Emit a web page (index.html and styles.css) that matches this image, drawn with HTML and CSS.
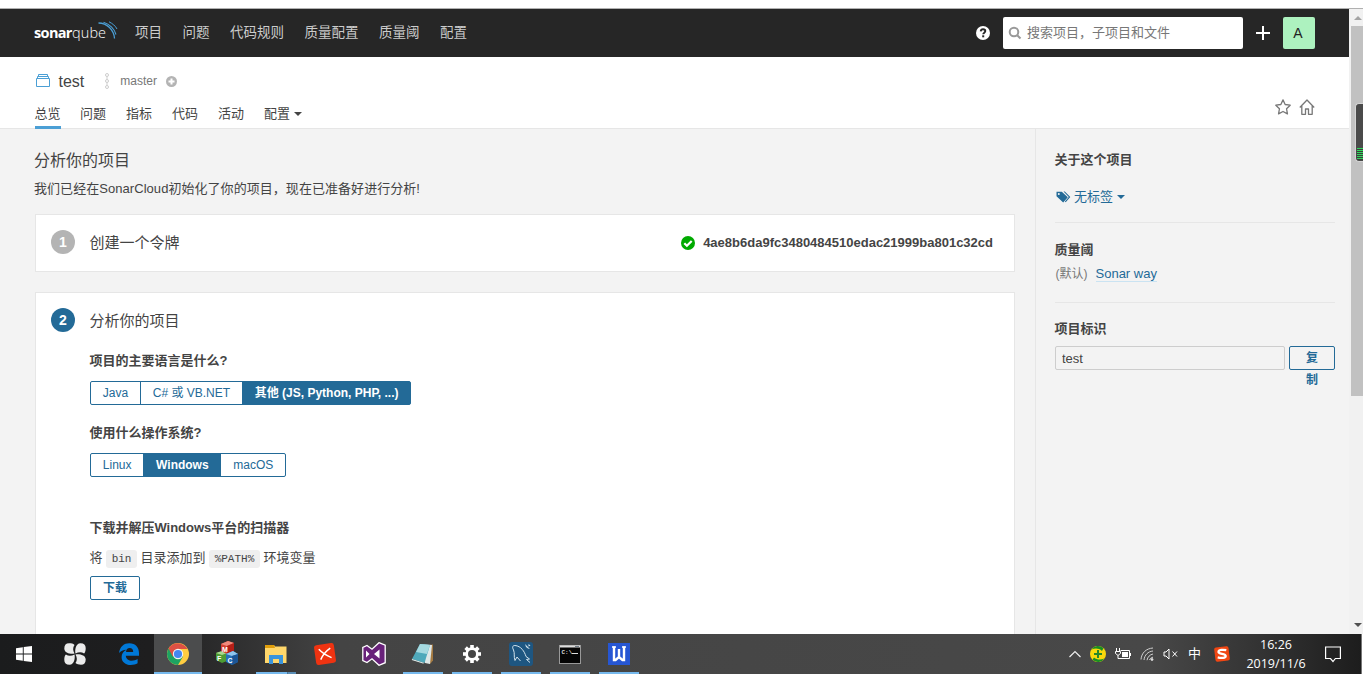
FILE: index.html
```html
<!DOCTYPE html>
<html lang="zh-CN">
<head>
  <meta charset="UTF-8">
  <meta name="viewport" content="width=device-width, initial-scale=1.0">
  <title>test</title>
  <link rel="stylesheet" href="styles.css">
</head>
<body>
  <div class="window-edge"></div>

  <div class="browser">
    <div class="page">
      <header class="navbar">
        <div class="logo">
          <b>sonar</b><span>qube</span>
          <svg width="20" height="18" viewBox="64 0 20 18" fill="none" stroke="#4b9fd5">
            <path d="M64.5 2C73 2 80 9 80.500 17.500" stroke-width="1.300"/>
            <path d="M69.500 1.200C75.500 3 80.500 8 82 13.500" stroke-width="1.100"/>
            <path d="M75 .800C78.500 2.500 81.500 5 83 8" stroke-width="1"/>
          </svg>
        </div>
        <nav class="main-nav">
          <a>项目</a>
          <a>问题</a>
          <a>代码规则</a>
          <a>质量配置</a>
          <a>质量阈</a>
          <a>配置</a>
        </nav>
        <div class="nav-right">
          <svg class="help" width="14" height="14" viewBox="0 0 14 14">
            <circle cx="7" cy="7" r="7" fill="#fff"/>
            <path d="M4.700 5.300C4.900 3.700 5.900 3.200 7 3.200c1.300 0 2.300.700 2.300 1.900C9.300 6.700 7.200 6.600 7.200 8.300" fill="none" stroke="#262626" stroke-width="1.900"/>
            <rect x="6.200" y="9.300" width="2" height="2" fill="#262626"/>
          </svg>
          <div class="search">
            <svg width="14" height="14" viewBox="0 0 14 14" fill="none" stroke="#999" stroke-width="2">
              <circle cx="6" cy="6" r="4.300"/>
              <path d="M9.200 9.200L12.500 12.500"/>
            </svg>
            <span>搜索项目，子项目和文件</span>
          </div>
          <svg class="plus" width="14" height="14" viewBox="0 0 14 14"><path d="M7 0v14M0 7h14" stroke="#fff" stroke-width="2"/></svg>
          <div class="avatar">A</div>
        </div>
      </header>

      <div class="context">
        <div class="breadcrumb">
          <svg width="14" height="14" viewBox="0 0 14 14" fill="none" stroke="#4b9fd5">
            <path d="M.500 4.500h13v8H.500zM1.500 4.500v-2h11v2M2.500 2.500v-2h9v2"/>
          </svg>
          <span class="project">test</span>
          <svg class="branch" width="6" height="16" viewBox="0 0 6 16" fill="none" stroke="#cdcdcd">
            <circle cx="3" cy="2" r="1.500"/><circle cx="3" cy="8" r="1.500"/><circle cx="3" cy="14" r="1.500"/>
            <path d="M3 3.500v3M3 9.500v3"/>
          </svg>
          <span class="branch-name">master</span>
          <svg width="11" height="11" viewBox="0 0 11 11"><circle cx="5.500" cy="5.500" r="5.500" fill="#b4b4b4"/><path d="M5.500 2.500v6M2.500 5.500h6" stroke="#fff" stroke-width="2"/></svg>
        </div>
        <div class="tabs">
          <a class="active">总览</a>
          <a>问题</a>
          <a>指标</a>
          <a>代码</a>
          <a>活动</a>
          <a>配置<i class="caret"></i></a>
        </div>
        <div class="context-actions">
          <svg width="16" height="16" viewBox="0 0 16 16" fill="none" stroke="#777" stroke-width="1.300" stroke-linejoin="round">
            <path d="M8 .900l2.150 4.600 5.050.700-3.650 3.550.900 5.100L8 12.450l-4.450 2.400.900-5.100L.800 6.200l5.050-.700z"/>
          </svg>
          <svg width="16" height="16" viewBox="0 0 16 16" fill="none" stroke="#777" stroke-width="1.300" stroke-linejoin="round">
            <path d="M.800 8.500L8 1l7.200 7.500M2.800 7v8.300h3.700V10h3v5.300h3.700V7"/>
          </svg>
        </div>
      </div>

      <div class="content">
        <main class="main">
          <h1>分析你的项目</h1>
          <p class="intro">我们已经在SonarCloud初始化了你的项目，现在已准备好进行分析!</p>

          <section class="card card-token">
            <span class="step">1</span>
            <h2>创建一个令牌</h2>
            <div class="token">
              <svg width="14" height="14" viewBox="0 0 14 14"><circle cx="7" cy="7" r="7" fill="#0a0"/><path d="M3.300 7.200l2.600 2.600 4.800-4.800" fill="none" stroke="#fff" stroke-width="2.200"/></svg>
              <b>4ae8b6da9fc3480484510edac21999ba801c32cd</b>
            </div>
          </section>

          <section class="card card-analyze">
            <span class="step current">2</span>
            <div class="step-body">
              <h2>分析你的项目</h2>
              <h3>项目的主要语言是什么?</h3>
              <div class="toggle">
                <button>Java</button><button>C# 或 VB.NET</button><button class="selected">其他 (JS, Python, PHP, ...)</button>
              </div>
              <h3>使用什么操作系统?</h3>
              <div class="toggle">
                <button>Linux</button><button class="selected">Windows</button><button>macOS</button>
              </div>
              <h3 class="download-title">下载并解压Windows平台的扫描器</h3>
              <p class="path-help">将 <code>bin</code> 目录添加到 <code>%PATH%</code> 环境变量</p>
              <button class="btn">下载</button>
            </div>
          </section>
        </main>

        <aside class="sidebar">
          <section class="about">
            <h3>关于这个项目</h3>
            <div class="tags">
              <svg width="15" height="12" viewBox="0 0 15 12">
                <path d="M7.500.500h1.300l5.500 5.600-4.600 5.200-.800-.700 3.900-4.500z" fill="#236a97"/>
                <path fill-rule="evenodd" d="M.500.700h5.300l6 5.500-4.600 5.300L.500 5.300zM2.800 1.900a1 1 0 100 2 1 1 0 000-2z" fill="#236a97"/>
              </svg>
              <span>无标签</span><i class="caret"></i>
            </div>
          </section>
          <section class="gate">
            <h3>质量阈</h3>
            <div class="gate-row"><span>(默认)</span><a>Sonar way</a></div>
          </section>
          <section class="key">
            <h3>项目标识</h3>
            <div class="key-row">
              <input type="text" value="test" readonly>
              <button class="btn copy">复<br>制</button>
            </div>
          </section>
        </aside>
      </div>
    </div>

    <div class="scrollbar">
      <i class="arrow up"></i>
      <div class="thumb"></div>
      <i class="arrow down"></i>
      <div class="volume-widget"></div>
    </div>
  </div>

  <footer class="taskbar">
    <div class="app start">
      <svg width="16" height="16" viewBox="0 0 16 16" fill="#fff"><path d="M0 2.200L6.800 1.200v6.300H0zM7.700 1L16 0v7.500H7.700zM0 8.400h6.800v6.400L0 13.800zM7.700 8.400H16V16l-8.300-1.100z"/></svg>
    </div>
    <div class="app swirl">
      <svg width="22" height="22" viewBox="0 0 22 22">
        <g fill="#ebebeb">
          <path id="petal" d="M10.500 10.500C7.500 11.300.300 10.500.300 5.500.300 2 2 .300 5 .300c2.300 0 4.200.300 5.500 1.600C8.600 4.500 8.800 7.500 10.500 10.500z"/>
          <use href="#petal" transform="rotate(90 11 11)"/>
          <use href="#petal" transform="rotate(180 11 11)"/>
          <use href="#petal" transform="rotate(270 11 11)"/>
        </g>
      </svg>
    </div>
    <div class="app">
      <svg width="20" height="22" viewBox="0 0 20 22"><path fill="#0078d7" d="M0 10C1 3.500 5 .300 10.300.300 16.500.300 20 4.500 20 10v2.700H6.800c.300 3.300 3 5 6 5 2 0 4-.600 5.800-1.600v4.200C16.800 21.400 14.500 22 11.800 22 6.500 22 2.600 18.800 2.600 14.200c0-3.300 1.800-6 4.900-7.400C4 7 1.600 8.200 0 10zm7-1h7.200c0-2.500-1.300-3.900-3.500-3.900S7.300 6.600 7 9z"/></svg>
    </div>
    <div class="app focused">
      <svg width="22" height="22" viewBox="0 0 22 22">
        <circle cx="11" cy="11" r="11" fill="#ffcd41"/>
        <path d="M11 11L1.500 5.500A11 11 0 0011 22l5-8.500z" fill="#1da362"/>
        <path d="M11 11L5.700 13.600 1.500 5.500A11 11 0 0120.500 6H11z" fill="#dd5044"/>
        <circle cx="11" cy="11" r="5.200" fill="#f4f4f4"/><circle cx="11" cy="11" r="4.100" fill="#4587f3"/>
      </svg>
    </div>
    <div class="app">
      <svg class="mfc" width="24" height="24" viewBox="0 0 24 24">
        <path d="M1 12l6-2 5 2v8l-5 2-6-3z" fill="#4d9c34"/><path d="M1 12l6-2 5 2-5 2z" fill="#a8d990"/>
        <path d="M6 3l7-3 6 2v8l-7 3-6-3z" fill="#d44032"/><path d="M6 3l7-3 6 2-7 3z" fill="#f08a7d"/><path d="M12 5l7-3v8l-7 3z" fill="#b51f17"/>
        <path d="M11 13l7-3 5 3v8l-6 3-6-3z" fill="#2670b7"/><path d="M11 13l7-3 5 3-6 2z" fill="#8fc5ed"/><path d="M17 15l6-2v8l-6 3z" fill="#1b5596"/>
        <g class="cube-text"><text x="7" y="11">M</text><text x="2" y="20">F</text><text x="12.500" y="22">C</text></g>
      </svg>
    </div>
    <div class="app opened stacked">
      <svg width="22" height="19" viewBox="0 0 22 19">
        <path d="M0 0h9l1 1.500h11.500V18H0z" fill="#ffd76b"/><path d="M0 0h9l1 3H0z" fill="#e09e0b"/><path d="M4 19v-9h14v9h-4v-5H8v5z" fill="#3a94dc"/>
      </svg>
    </div>
    <div class="app">
      <svg width="22" height="22" viewBox="0 0 22 22"><g transform="rotate(-8 11 11)"><rect x="1" y="1" width="20" height="20" rx="2.500" fill="#ef3311"/><path d="M5.500 5.500C8 9 12.500 13 17 15.500M17 6C12 8.500 8.500 12 6 16" fill="none" stroke="#fff" stroke-width="1.500"/></g></svg>
    </div>
    <div class="app">
      <svg width="24" height="24" viewBox="0 0 24 24"><path d="M17 .700l6.200 2.500v17.500L17 23.300l-7-6.500-5 3.700-4.200-2V5.500l4.200-2L10 7.200z" fill="#68217a" stroke="#fff" stroke-width="1.300"/><path d="M17.500 7.500v9L12 12zM4 8.500l3.500 3.500L4 15.500z" fill="#fff"/></svg>
    </div>
    <div class="app opened">
      <svg width="24" height="22" viewBox="0 0 24 22">
        <path d="M18 2l4-.500v16l-2.500 3-1.500.500z" fill="#a47a42"/><path d="M9 1l12 1-2 19-5-1z" fill="#dfe8e8"/><path d="M9 1l10 1-5.500 18L1 16z" fill="#4fa9bb"/><path d="M9 1l10 1-3 9-11-2z" fill="#a5d9e0"/><path d="M1 16l12.500 4L12 20.500.800 17z" fill="#e5f0ef"/>
      </svg>
    </div>
    <div class="app opened">
      <svg width="18" height="18" viewBox="0 0 18 18"><g fill="#fff"><path id="tooth" d="M7.200 0h3.600v18H7.200z"/><use href="#tooth" transform="rotate(45 9 9)"/><use href="#tooth" transform="rotate(90 9 9)"/><use href="#tooth" transform="rotate(135 9 9)"/><circle cx="9" cy="9" r="6.700"/></g><circle cx="9" cy="9" r="4" fill="#454545"/></svg>
    </div>
    <div class="app opened">
      <svg width="24" height="24" viewBox="0 0 24 24"><rect width="24" height="24" rx="3" fill="#1e5681"/><path d="M6 18.500C4.500 14 6 11.500 4.500 8 3 5 3.500 3.500 6 3.500c6 .500 9.500 6 11 11l3.500 2.500-3 .500 3.500 3M6 18.500l2-3.500 3.500 4" fill="none" stroke="#d2e3ed" stroke-width="1"/><path d="M16 2l5 5-2-.500-2-1.500zM19.500 2l2 1.500-2 1z" fill="#d2e3ed"/></svg>
    </div>
    <div class="app opened">
      <svg width="22" height="19" viewBox="0 0 22 19"><rect x=".500" y=".500" width="21" height="18" fill="#050505" stroke="#999"/><path d="M1 1.500h20" stroke="#ddd" stroke-width="2"/><path d="M16 1.500h4" stroke="#6f7b86"/><text class="cmd-text" x="2.500" y="9">C:\</text><path d="M13 8.500h6" stroke="#ddd"/></svg>
    </div>
    <div class="app opened">
      <svg width="22" height="22" viewBox="0 0 22 22"><rect width="22" height="22" fill="#2656d3"/><path d="M4 4h4M14 4h4" stroke="#fff" stroke-width="1.500"/><path d="M6 3.500v13.500h1.500L11 14l3.500 3H16V3.500M11 6v8" fill="none" stroke="#fff" stroke-width="2.400"/></svg>
    </div>

    <div class="tray">
      <svg width="12" height="8" viewBox="0 0 12 8"><path d="M.500 7L6 1.500 11.500 7" fill="none" stroke="#eee" stroke-width="1.200"/></svg>
      <svg width="16" height="16" viewBox="0 0 16 16"><circle cx="8" cy="8" r="8" fill="#f9d90c"/><path d="M1.500 3.500A8 8 0 0113.500 2.200L12 5C9 2 5 2 1.500 3.500zM14.500 12.500A8 8 0 012.500 13.800L4 11.500c3 2.500 7 2.500 10.500 1z" fill="#198e23"/><path d="M8 4v8M4 8h8" stroke="#27872a" stroke-width="2"/></svg>
      <svg width="16" height="12" viewBox="0 0 16 12" fill="none" stroke="#fff"><path d="M5.500 2.500h9v8h-9M15.500 5v3M1.500 0v3M4.500 0v3M.500 3.500h5v2l-2 1.500h-1L.500 5.500zM3 7v3.500h3"/><path d="M7 4h6v5H7z" fill="#fff" stroke="none"/></svg>
      <svg width="14" height="14" viewBox="0 0 14 14" fill="none" stroke="#cfcfcf"><path d="M1 12.500C1.500 6 6 1.500 13 1M4 13C4.500 8 8 4.500 13 4M7 13.200C7.500 10 10 7.500 13 7M9.500 13c.500-1.500 2-2.500 3.500-2.800"/><circle cx="12" cy="12.500" r="1" fill="#fff"/></svg>
      <svg width="16" height="12" viewBox="0 0 16 12" fill="none" stroke="#fff"><path d="M1 4h2l3-3v10L3 8H1zM9.500 3.500l4.500 5M14 3.500l-4.500 5"/></svg>
      <span class="ime">中</span>
      <svg class="sogou" width="16" height="16" viewBox="0 0 16 16"><rect x=".800" y=".800" width="14.400" height="14.400" rx="2" fill="#f04613" transform="rotate(-7 8 8)"/><path d="M12.300 4.200C9 3.500 4.500 3.500 4.500 5.900c0 2.500 7.200 1.200 7.200 4 0 2.400-4.500 2.400-8 1.500" fill="none" stroke="#fff" stroke-width="2.300"/></svg>
      <div class="clock">16:26<br>2019/11/6</div>
      <svg width="16" height="17" viewBox="0 0 16 17" fill="none" stroke="#fff" stroke-width="1.200"><path d="M.600 1h14.800v11.500h-5L8 15.500l-2.500-3H.600z"/></svg>
    </div>
  </footer>
</body>
</html>
```
FILE: styles.css
```css
* {
  box-sizing: border-box;
}

body {
  margin: 0;
  height: 675px;
  display: flex;
  flex-direction: column;
  overflow: hidden;
  background: #fff;
  color: #444;
  font-family: "Liberation Sans", "Noto Sans CJK SC", sans-serif;
  font-size: 13px;
  line-height: 20px;
}

h1, h2, h3, p {
  margin: 0;
}

svg {
  display: block;
  flex: none;
}

button, input {
  font-family: inherit;
  border-radius: 2px;
}

.window-edge {
  height: 9px;
  flex: none;
  border-bottom: 1px solid #b0b0b0;
}

.browser {
  display: flex;
  height: 625px;
  flex: none;
}

.page {
  width: 1349px;
  height: 625px;
  overflow: hidden;
  background: #f3f3f3;
}

/* top navigation */
.navbar {
  height: 48px;
  display: flex;
  align-items: center;
  padding: 0 34px;
  background: #262626;
}

.logo {
  position: relative;
  display: flex;
  width: 84px;
  height: 20px;
  color: #fff;
  font-family: "Open Sans", sans-serif;
  font-size: 14.500px;
}

.logo b {
  width: 38px;
  letter-spacing: -0.650px;
}

.logo span {
  font-weight: 300;
  letter-spacing: 0.100px;
}

.logo svg {
  position: absolute;
  top: -2px;
  right: 0;
}

.main-nav {
  display: flex;
  gap: 20.500px;
  margin-left: 17px;
  font-size: 13.500px;
  color: #ccc;
}

.nav-right {
  display: flex;
  align-items: center;
  margin-left: auto;
}

.search {
  width: 240px;
  height: 32px;
  display: flex;
  align-items: center;
  gap: 5px;
  margin-left: 13px;
  padding-left: 5px;
  background: #fff;
  border-radius: 2px;
  color: #777;
}

.plus {
  margin: 0 13px;
}

.avatar {
  width: 32px;
  height: 32px;
  padding-right: 2px;
  border-radius: 2px;
  background: #adf2bf;
  color: #222;
  font-size: 14px;
  line-height: 32px;
  text-align: center;
}

/* project header */
.context {
  position: relative;
  height: 72px;
  padding: 14px 34px 0;
  background: #fff;
  border-bottom: 1px solid #e6e6e6;
}

.breadcrumb {
  display: flex;
  align-items: center;
  height: 20px;
  padding-left: 2px;
}

.project {
  margin: 1px 20px 0 8.500px;
  font-size: 16px;
}

.branch-name {
  margin: 0 9px 0 10px;
  font-size: 12px;
  color: #777;
}

.tabs {
  display: flex;
  gap: 20px;
  margin-top: 9px;
}

.tabs a {
  height: 29px;
  padding-top: 4px;
}

.tabs .active {
  margin-left: 1px;
  margin-right: -0.600px;
  border-bottom: 3px solid #4b9fd5;
  text-indent: -0.500px;
}

.caret {
  display: inline-block;
  margin-left: 4px;
  vertical-align: 2px;
  border: 4px solid transparent;
  border-top-color: currentColor;
  border-bottom: 0;
}

.context-actions {
  position: absolute;
  right: 34px;
  top: 42px;
  display: flex;
  gap: 8px;
}

/* body */
.content {
  display: flex;
  height: 505px;
}

.main {
  width: 1035px;
  padding: 20px 20px 0 35px;
}

h1 {
  margin-left: -1px;
  font-size: 16px;
  font-weight: 400;
  line-height: 24px;
}

.intro {
  margin: 6px 0 15px -1px;
  letter-spacing: 0.050px;
}

h2 {
  margin-left: -0.600px;
  font-size: 15px;
  font-weight: 400;
  line-height: 26px;
}

h3 {
  font-size: 13px;
  font-weight: 700;
}

.card {
  display: flex;
  padding: 15px 21px 0 15px;
  background: #fff;
  border: 1px solid #e6e6e6;
}

.card-token {
  height: 58px;
}

.card-analyze {
  height: 440px;
  margin-top: 20px;
}

.step {
  width: 24px;
  height: 24px;
  flex: none;
  margin-right: 15px;
  border-radius: 50%;
  background: #b4b4b4;
  color: #fff;
  font-size: 14px;
  font-weight: 700;
  line-height: 24px;
  text-align: center;
}

.step.current {
  background: #236a97;
}

.token {
  display: flex;
  align-items: center;
  gap: 8px;
  height: 26px;
  margin-left: auto;
}

.step-body h3 {
  margin: 17px 0 10px -0.600px;
}

.toggle {
  display: flex;
}

.step-body .toggle + h3 {
  margin-top: 18px;
}

.step-body .toggle + .download-title {
  margin-top: 41px;
}

.toggle button, .btn {
  height: 24px;
  padding: 0 11.800px;
  background: transparent;
  border: 1px solid #236a97;
  border-radius: 0;
  color: #236a97;
  font-size: 12px;
  line-height: 22px;
}

.toggle button + button {
  margin-left: -1px;
}

.toggle button:first-child {
  border-radius: 2px 0 0 2px;
}

.toggle button:last-child {
  border-radius: 0 2px 2px 0;
}

.toggle .selected {
  background: #236a97;
  color: #fff;
  font-weight: 700;
}

code {
  display: inline-block;
  height: 18px;
  padding: 0 5.500px;
  border-radius: 3px;
  background: #efefef;
  font-family: "Liberation Mono", monospace;
  font-size: 11px;
  line-height: 18px;
}

.path-help {
  height: 20px;
  margin: 0 0 8px -0.500px;
}

.btn {
  display: block;
  min-width: 50px;
  border-radius: 2px;
  font-weight: 700;
}

.sidebar {
  width: 314px;
  padding: 0 14px 0 19px;
  border-left: 1px solid #e6e6e6;
}

.sidebar h3 {
  margin-left: -0.500px;
}

.about {
  height: 94px;
  padding-top: 21px;
  border-bottom: 1px solid #e6e6e6;
}

.tags {
  display: flex;
  align-items: center;
  margin: 17px 0 0 1px;
  color: #236a97;
}

.tags span {
  margin-left: 3px;
}

.gate {
  height: 80px;
  padding-top: 17px;
  border-bottom: 1px solid #e6e6e6;
}

.gate-row {
  display: flex;
  gap: 8px;
  margin: 4px 0 0 0.500px;
}

.gate-row span {
  color: #777;
  font-size: 12px;
}

.gate-row a {
  height: 18px;
  color: #236a97;
  border-bottom: 1px solid #cae3f2;
}

.key {
  padding-top: 16px;
}

.key-row {
  display: flex;
  gap: 4px;
  margin-top: 7px;
}

.key input {
  width: 230px;
  height: 24px;
  padding: 0 6px;
  border: 1px solid #cdcdcd;
  background: transparent;
  color: #444;
  font-size: 13px;
}

.copy {
  width: 46px;
  min-width: 0;
  display: flex;
  justify-content: center;
}

/* window scrollbar */
.scrollbar {
  position: relative;
  width: 14px;
  padding: 7px 0 0 2px;
  background: #f1f1f1;
}

.thumb {
  height: 370px;
  margin-top: 6px;
  background: #c1c1c1;
}

.arrow {
  display: block;
  width: 8px;
  margin-left: 3px;
  border: 4px solid transparent;
}

.arrow.up {
  border-top: 0;
  border-bottom-color: #a3a3a3;
}

.arrow.down {
  margin-top: 227px;
  border-bottom: 0;
  border-top-color: #505050;
}

.volume-widget {
  position: absolute;
  top: 94px;
  right: 0;
  width: 8px;
  height: 59px;
  border: 1px solid #d5d5d5;
  border-right: 0;
  border-radius: 4px 0 0 4px;
  background: repeating-linear-gradient(#2fda5b 0 1px, #3c3c3c 1px 2px) 1px 44px / 7px 12px no-repeat, #4a4a4a;
}

/* taskbar */
.taskbar {
  display: flex;
  flex: none;
  width: 1362px;
  height: 40px;
  background: linear-gradient(90deg, #1b1c1d 0, #1e1e1f 150px, #444 340px, #484848 1150px, #333 1260px, #1d1d1d 1361px, #777 1361px);
  color: #fff;
}

.app {
  position: relative;
  width: 49px;
  display: flex;
  justify-content: center;
  align-items: center;
  padding-right: 2px;
}

.start {
  width: 48px;
  padding-right: 0;
}

.swirl {
  width: 53px;
  margin-right: 4px;
  padding-right: 0;
}

.focused {
  width: 48px;
  margin-right: 1px;
  padding: 2px 0 0;
  background: #4b4c4d;
  border-bottom: 2px solid #76b9ed;
}

.mfc {
  margin-top: -2px;
}

.opened::after {
  content: "";
  position: absolute;
  left: 4px;
  bottom: 0;
  width: 40px;
  height: 2px;
  background: #76b9ed;
}

.stacked::after {
  background: linear-gradient(90deg, #76b9ed 31px, #41607a 31px, #5a8db5 32px);
}

.cube-text text {
  fill: #fff;
  font: 700 7px "Liberation Sans", sans-serif;
}

.cmd-text {
  fill: #ddd;
  font: 700 6px "Liberation Mono", monospace;
}

.tray {
  display: flex;
  align-items: center;
  gap: 9px;
  margin-left: auto;
  padding-right: 21px;
}

.ime {
  margin: 0 4px 0 0;
  font-size: 13px;
}

.clock {
  width: 78px;
  margin: 0 1px 0 -2px;
  font-family: "Open Sans", sans-serif;
  font-size: 12.500px;
  line-height: 19px;
  text-align: center;
}
```
